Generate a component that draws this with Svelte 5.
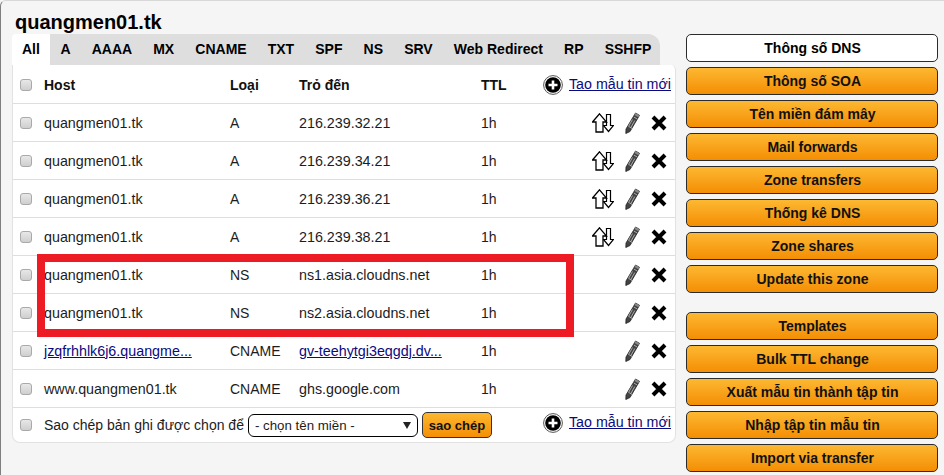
<script>
  const tabs = ["All", "A", "AAAA", "MX", "CNAME", "TXT", "SPF", "NS", "SRV", "Web Redirect", "RP", "SSHFP"];

  const records = [
    { host: "quangmen01.tk", type: "A", target: "216.239.32.21", move: true },
    { host: "quangmen01.tk", type: "A", target: "216.239.34.21", move: true },
    { host: "quangmen01.tk", type: "A", target: "216.239.36.21", move: true },
    { host: "quangmen01.tk", type: "A", target: "216.239.38.21", move: true },
    { host: "quangmen01.tk", type: "NS", target: "ns1.asia.cloudns.net" },
    { host: "quangmen01.tk", type: "NS", target: "ns2.asia.cloudns.net" },
    { host: "jzqfrhhlk6j6.quangme...", type: "CNAME", target: "gv-teehytgi3eqgdj.dv...", links: true },
    { host: "www.quangmen01.tk", type: "CNAME", target: "ghs.google.com" }
  ];

  const menuTop = ["Thông số DNS", "Thông số SOA", "Tên miền đám mây", "Mail forwards", "Zone transfers", "Thống kê DNS", "Zone shares", "Update this zone"];
  const menuBottom = ["Templates", "Bulk TTL change", "Xuất mẫu tin thành tập tin", "Nhập tập tin mẫu tin", "Import via transfer"];
</script>

{#snippet plus()}
  <svg class="plus" width="20" height="20" viewBox="0 0 20 20" aria-hidden="true">
    <circle cx="10" cy="10" r="9.4" fill="#fff" stroke="#555" stroke-width="1" />
    <circle cx="10" cy="10" r="7.8" fill="#000" />
    <path d="M10 5.500v9M5.500 10h9" stroke="#fff" stroke-width="2.600" />
  </svg>
{/snippet}

{#snippet newLink()}
  <span class="new-record">
    {@render plus()}
    <a href="#new">Tao mẫu tin mới</a>
  </span>
{/snippet}

<div class="page">
  <main class="content">
    <h1>quangmen01.tk</h1>
    <nav class="tabs">
      {#each tabs as tab, i}
        <span class="tab" class:active={i === 0}>{tab}</span>
      {/each}
    </nav>

    <section class="table">
      <div class="row head">
        <input type="checkbox" />
        <span>Host</span>
        <span>Loại</span>
        <span>Trỏ đến</span>
        <span>TTL</span>
        {@render newLink()}
      </div>

      {#each records as r}
        <div class="row">
          <input type="checkbox" />
          <span class="value">{#if r.links}<a href="#host">{r.host}</a>{:else}{r.host}{/if}</span>
          <span>{r.type}</span>
          <span class="value">{#if r.links}<a href="#target">{r.target}</a>{:else}{r.target}{/if}</span>
          <span>1h</span>
          <span class="actions">
            {#if r.move}
              <svg width="22" height="20" viewBox="0 0 22 20" aria-hidden="true">
                <path d="M14.500 1.500v11h-3l5 6 5-6h-3v-11z" fill="#fff" stroke="#000" stroke-width="1.200" />
                <path d="M7.500.8 14.500 9H11v10H4V9H.5z" fill="#fff" stroke="#000" stroke-width="1.300" />
              </svg>
            {/if}
            <svg class="pencil" width="15" height="22" viewBox="0 0 15 22" aria-hidden="true">
              <path d="M10.500 1 14.500 3.300 5 19.500 .8 21.500 1 17z" fill="#444" stroke="#222" stroke-width=".8" />
              <path d="M8.800 5 12.200 7M3.800 14.500l3.400 2M7.500 7.500 3.500 14.500M9.800 8.500l-4 7" stroke="#c4c4c4" stroke-width=".8" fill="none" />
              <path d="M10.500 1 14.500 3.300 13.300 5.300 9.400 3z" fill="#888" />
            </svg>
            <svg width="16" height="16" viewBox="0 0 16 16" aria-hidden="true">
              <path d="M2 2l12 12M14 2 2 14" stroke="#000" stroke-width="4" />
            </svg>
          </span>
        </div>
      {/each}

      <div class="row foot">
        <input type="checkbox" />
        <span class="copy-label">Sao chép bản ghi được chọn để</span>
        <span class="select">- chọn tên miền -<i></i></span>
        <button class="copy-btn">sao chép</button>
        {@render newLink()}
      </div>
    </section>

    <div class="highlight"></div>
  </main>

  <aside class="menu">
    <div class="group">
      {#each menuTop as item, i}
        <button class="menu-btn" class:current={i === 0}>{item}</button>
      {/each}
    </div>
    <div class="group">
      {#each menuBottom as item}
        <button class="menu-btn">{item}</button>
      {/each}
    </div>
  </aside>
</div>

<style>
  :global(body) {
    margin: 0;
    background: #f5f5f5;
  }

  .page {
    display: flex;
    box-sizing: border-box;
    width: 944px;
    height: 475px;
    overflow: hidden;
    padding: 0 0 0 11px;
    border-left: 1px solid #7f7f7f;
    border-top: 1px solid #d8d8d8;
    border-top-left-radius: 6px;
    background: #f5f5f5;
    color: #1c1c1c;
    font-family: "Liberation Sans", Arial, sans-serif;
    font-size: 14px;
  }

  .content {
    position: relative;
    flex: 0 0 663px;
  }

  h1 {
    margin: 10px 0 0 3px;
    height: 23px;
    color: #000;
    font-size: 20px;
    line-height: 23px;
    font-weight: bold;
  }

  .tabs {
    display: flex;
    box-sizing: border-box;
    width: 648px;
    height: 31px;
    background: #dedede;
    border-radius: 6px 12px 0 0;
  }

  .tab {
    flex-shrink: 0;
    padding: 0 10.550px;
    color: #000;
    font-size: 14px;
    font-weight: bold;
    line-height: 31px;
    white-space: nowrap;
  }

  .tab.active {
    padding: 0 10px;
    background: #fff;
    border-radius: 4px 0 0 0;
  }

  .table {
    box-sizing: border-box;
    width: 664px;
    background: #fff;
    border: 1px solid #e2e2e2;
    border-top: 0;
    border-radius: 0 5px 8px 8px;
  }

  .row {
    display: grid;
    grid-template-columns: 24px 186px 69px 182px 1fr auto;
    align-items: center;
    box-sizing: border-box;
    height: 38px;
    padding: 0 4px 0 7px;
    border-bottom: 1px solid #dedede;
  }

  .value {
    font-size: 14.300px;
  }

  .row.head {
    height: 39px;
    padding-top: 2px;
    font-weight: bold;
    color: #111;
  }

  .row.foot {
    display: flex;
    height: 34px;
    border-bottom: 0;
  }

  input[type="checkbox"] {
    appearance: none;
    box-sizing: border-box;
    width: 12px;
    height: 12px;
    margin: 0;
    background: linear-gradient(#e8e8e8, #cfcfcf);
    border: 1px solid #a9a9a9;
    border-radius: 3px;
  }

  a {
    color: #0a0a80;
    text-decoration: underline;
  }

  .new-record {
    display: inline-flex;
    align-items: center;
    gap: 6px;
    font-size: 14.250px;
    font-weight: normal;
  }

  .new-record a {
    position: relative;
    top: -1px;
  }

  .foot .new-record {
    margin-left: auto;
    margin-top: -5px;
  }

  .plus {
    display: block;
  }

  .actions {
    display: flex;
    align-items: center;
    justify-content: flex-end;
    gap: 11px;
    padding-right: 4px;
  }

  .copy-label {
    margin-left: 12px;
  }

  .select {
    position: relative;
    display: block;
    box-sizing: border-box;
    width: 170px;
    height: 23px;
    margin: 0 4px 0 4px;
    padding-left: 6px;
    background: #fff;
    border: 1px solid #000;
    border-radius: 6px;
    font-size: 13.300px;
    line-height: 22px;
  }

  .select i {
    position: absolute;
    top: 7px;
    right: 6px;
    border: 4px solid transparent;
    border-top: 7px solid #222;
    border-bottom: 0;
  }

  .copy-btn {
    box-sizing: border-box;
    width: 70px;
    height: 26px;
    padding: 0;
    background: linear-gradient(#fdb72f, #f58f05);
    border: 1px solid #333;
    border-radius: 5px;
    color: #111;
    font-family: inherit;
    font-size: 13px;
    font-weight: bold;
  }

  .highlight {
    position: absolute;
    top: 253px;
    left: 25px;
    box-sizing: border-box;
    width: 537px;
    height: 83px;
    border: 8px solid #ed1c24;
    pointer-events: none;
  }

  .menu {
    display: flex;
    flex-direction: column;
    gap: 19px;
    margin: 33px 0 0 10px;
  }

  .group {
    display: flex;
    flex-direction: column;
    gap: 5px;
  }

  .menu-btn {
    box-sizing: border-box;
    width: 252px;
    height: 28px;
    padding: 0 0 0 1px;
    background: linear-gradient(#fdb832, #f48e04);
    border: 1px solid #2b2b2b;
    border-radius: 5px;
    color: #111;
    font-family: inherit;
    font-size: 14px;
    font-weight: bold;
  }

  .menu-btn.current {
    background: #fff;
    color: #000;
  }
</style>
